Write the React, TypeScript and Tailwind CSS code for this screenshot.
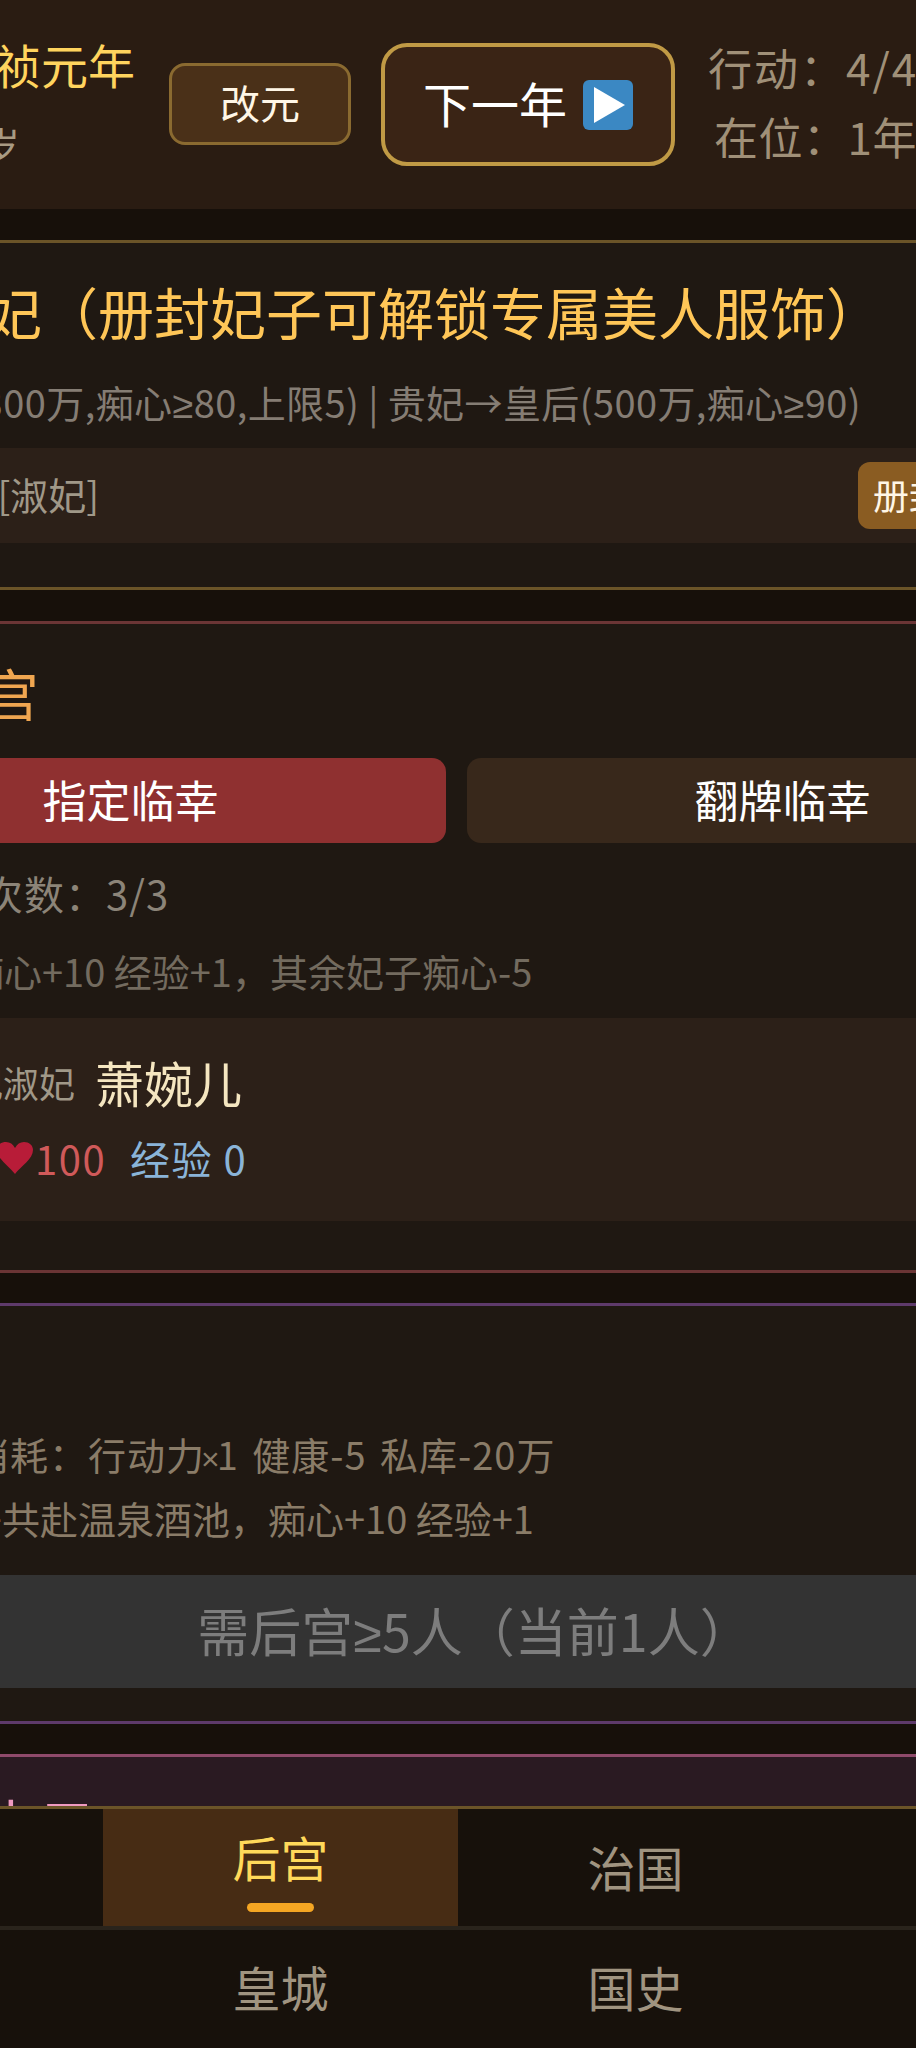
const Narrow = ({ children, small }: { children: string; small?: boolean }) => (
  <span className={small ? "[font-family:'Liberation_Sans',sans-serif] leading-[0] text-[32px] -mx-[4px]" : "[font-family:'Liberation_Sans',sans-serif] leading-[0]"}>{children}</span>
);

export default function App() {
  return (
    <div className="h-[2048px] w-[916px] overflow-hidden flex flex-col bg-[#17100a] [font-family:'Noto_Sans_CJK_SC','Noto_Sans',sans-serif]">
      <main className="flex-1 min-h-0 overflow-hidden">
        <div className="w-[1283px] -ml-[185px]">
          <header className="h-[209px] flex items-center bg-[#2a1c12] pl-[132px]">
            <div className="w-[222px] shrink-0">
              <div className="text-[47px] leading-[68px] text-[#ffd45e] whitespace-nowrap">崇祯元年</div>
              <div className="text-[38px] leading-[72px] mt-[10px] text-[#a89a82] ml-[14px] whitespace-nowrap">6岁</div>
            </div>
            <button className="w-[182px] h-[82px] -mt-[2px] pb-[4px] rounded-[16px] border-[3px] border-[#8a6a30] bg-[#4a3018] text-[#fff6e6] text-[40px] shrink-0">改元</button>
            <button className="ml-[30px] w-[294px] h-[123px] -mt-[1px] rounded-[26px] border-[4px] border-[#c09a45] bg-[#3a2415] text-white text-[48px] flex items-center justify-center gap-[16px] shrink-0">
              <span className="pb-[5px]">下一年</span>
              <svg width="50" height="50" viewBox="0 0 50 50" className="-mb-[1px]">
                <rect width="50" height="50" rx="6" fill="#3b88c3" />
                <path d="M11 7 L42 25 L11 43 Z" fill="#fff" />
              </svg>
            </button>
            <div className="ml-[33px] w-[209px] shrink-0 pb-[5px] text-[44px] leading-[69px] text-[#a09078] text-right whitespace-nowrap">
              <div className="tracking-[2px]">行动：4/4</div>
              <div className="tracking-[0.5px]">在位：1年</div>
            </div>
          </header>

          <section className="mt-[31px] border-y-[3px] border-[#6b5428] bg-[#1f1812] pt-[26px] pb-[44px]">
            <h2 className="pl-[3px] text-[56px] leading-[84px] font-normal text-[#ffc657] whitespace-nowrap">册封贵妃（册封妃子可解锁专属美人服饰）</h2>
            <p className="mt-[24px] text-[38px] leading-[50px] tracking-[0.4px] text-[#857d74] whitespace-nowrap">嫔→贵妃(300万,痴心<Narrow>≥</Narrow>80,上限5) | 贵妃→皇后(500万,痴心<Narrow>≥</Narrow>90)</p>
            <div className="mt-[21px] h-[95px] bg-[#2c2018] flex items-center justify-between pr-[138px]">
              <span className="text-[38px] text-[#a09888] whitespace-nowrap pl-[60px] pb-[5px]">萧婉儿 [淑妃]</span>
              <button className="w-[102px] h-[67px] pb-[4px] rounded-[12px] bg-[#8a5c22] text-[#fff6e6] text-[36px]">册封</button>
            </div>
          </section>

          <section className="mt-[31px] border-y-[3px] border-[#6b3535] bg-[#1f1812] pt-[26px] pb-[49px]">
            <h2 className="text-[56px] leading-[84px] font-normal text-[#f0a650] whitespace-nowrap">我的后宫</h2>
            <div className="mt-[24px] grid grid-cols-2 gap-[21px]">
              <button className="h-[85px] pb-[4px] rounded-[14px] bg-[#8f3030] text-white text-[44px]">指定临幸</button>
              <button className="h-[85px] pb-[4px] rounded-[14px] bg-[#38281b] text-white text-[44px]">翻牌临幸</button>
            </div>
            <p className="mt-[25px] pl-[4px] text-[40px] leading-[50px] tracking-[1px] text-[#8c8478] whitespace-nowrap">今日侍寝次数：3/3</p>
            <p className="mt-[28px] pl-[37px] text-[38px] leading-[50px] text-[#736b5f] whitespace-nowrap">效果：痴心+10 经验+1，其余妃子痴心-5</p>
            <div className="mt-[22px] h-[203px] bg-[#2c2018] pt-[36px]">
              <div className="h-[60px] flex items-center whitespace-nowrap pl-[116px] pb-[4px]">
                <span className="text-[36px] text-[#a09888]">淑妃淑妃</span>
                <span className="ml-[20px] text-[49px] text-[#f5e6c0]">萧婉儿</span>
              </div>
              <div className="mt-[19px] h-[50px] flex items-center text-[40px] whitespace-nowrap pl-[182px]">
                <svg width="36" height="32" viewBox="0 0 36 32" className="shrink-0">
                  <path d="M18 32 C12 24 0 17 0 8 C0 3 4 0 9 0 C13 0 16 2 18 6 C20 2 23 0 27 0 C32 0 36 3 36 8 C36 17 24 24 18 32 Z" fill="#b81c38" />
                </svg>
                <span className="ml-[2px] text-[#d05a5a] tracking-[1.5px]">100</span>
                <span className="ml-[24px] text-[#8ab4d8] tracking-[1.5px]">经验 0</span>
              </div>
            </div>
          </section>

          <section className="mt-[30px] border-y-[3px] border-[#5e3a6b] bg-[#1f1812] pt-[29px] pb-[33px]">
            <h2 className="text-[56px] leading-[84px] font-normal text-[#c58ad8] whitespace-nowrap">酒池</h2>
            <p className="mt-[10px] pl-[156px] text-[38px] leading-[50px] tracking-[1px] text-[#8a7c68] whitespace-nowrap [word-spacing:4px]">消耗：行动力<Narrow small>×</Narrow>1 健康-5 私库-20万</p>
            <p className="mt-[14px] pl-[73px] text-[38px] leading-[50px] text-[#8a7c68] whitespace-nowrap">与妃子共赴温泉酒池，痴心+10 经验+1</p>
            <button className="mt-[32px] w-full h-[113px] pb-[4px] pl-[36px] bg-[#333333] text-[#7d7d7d] text-[52px]">需后宫<Narrow>≥</Narrow>5人（当前1人）</button>
          </section>

          <section className="mt-[30px] border-t-[3px] border-[#8f4a6b] bg-[#2a1a22] pt-[24px] pb-[40px]">
            <h2 className="text-[56px] leading-[84px] font-normal text-[#f09ac0] whitespace-nowrap">皇家庆中元</h2>
          </section>
        </div>
      </main>

      <nav className="h-[242px] shrink-0 border-t-[3px] border-[#6b5428] bg-[#17110b] px-[103px] grid grid-cols-2 grid-rows-[117px_4px_118px]">
        <button className="relative bg-[#472c14] text-[#ffd95a] text-[48px] leading-[48px] pb-[24px]">
          后宫
          <span className="absolute left-[144px] top-[94px] w-[67px] h-[9px] rounded-full bg-[#f5a623]" />
        </button>
        <button className="text-[#a09480] text-[48px] pb-[4px]">治国</button>
        <div className="col-span-2 -mx-[103px] bg-[#2a241c]" />
        <button className="text-[#a09480] text-[48px] pb-[6px]">皇城</button>
        <button className="text-[#a09480] text-[48px] pb-[6px]">国史</button>
      </nav>
    </div>
  );
}
